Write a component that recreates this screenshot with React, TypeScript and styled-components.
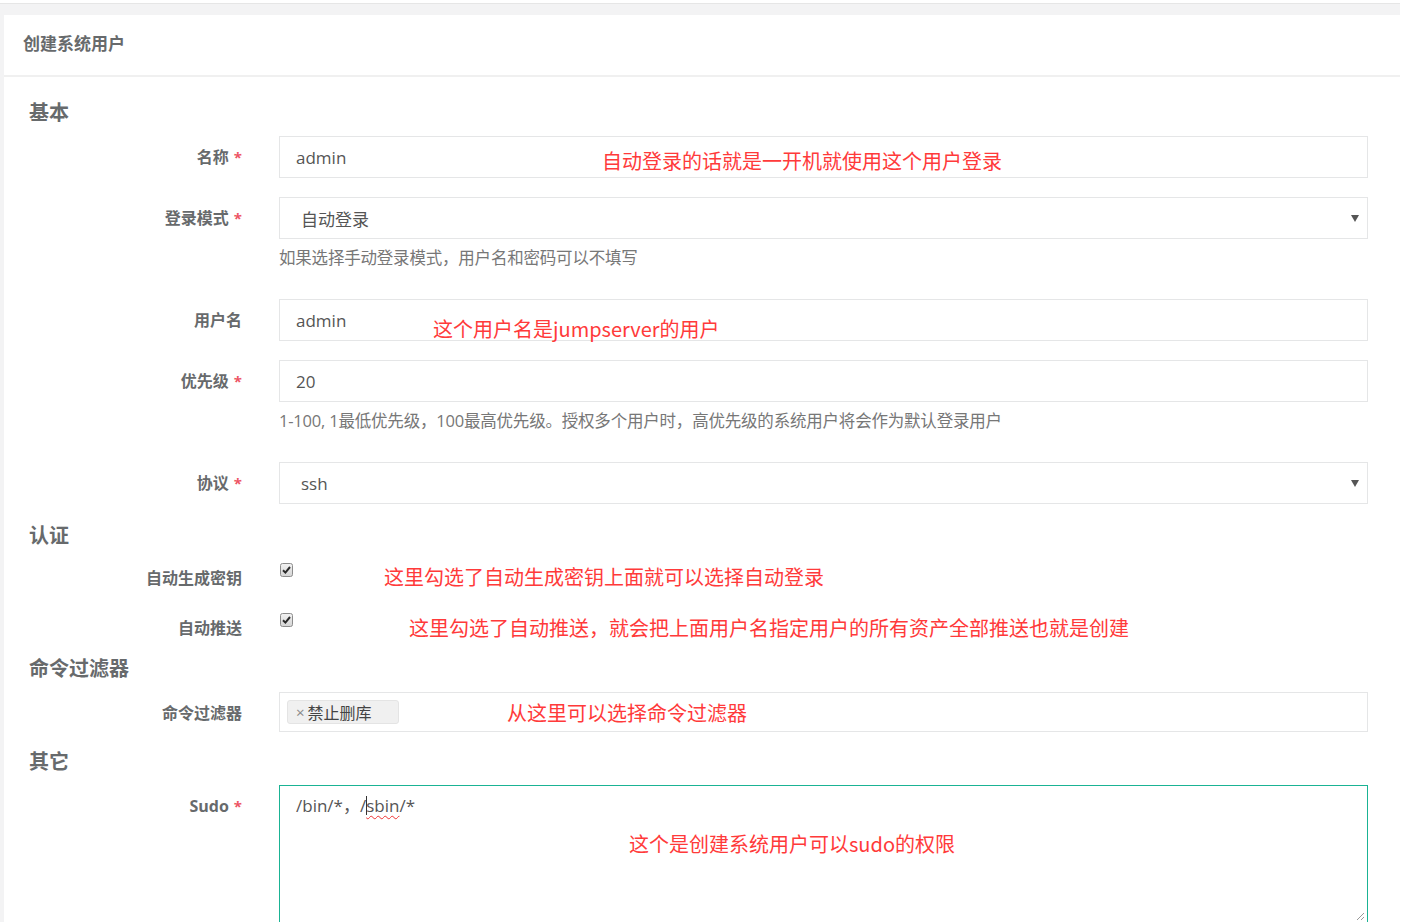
import React from "react";
import styled, { createGlobalStyle } from "styled-components";

const Global = createGlobalStyle`
  html, body { margin: 0; padding: 0; background: #fff; overflow: hidden; }
  body { font-family: "Open Sans", "Noto Sans CJK SC", sans-serif; color: #676a6c; }
  * { box-sizing: border-box; }
`;

const Page = styled.div`
  width: 1400px;
  min-height: 100vh;
  margin-top: 3px;
  border-top: 1px solid #e6e6e6;
  background: #f3f3f4;
  padding: 11px 0 0 4px;
  display: flex;
`;

const Card = styled.div`
  flex: 1;
  background: #fff;
  display: flex;
  flex-direction: column;
`;

const CardHeader = styled.div`
  height: 62px;
  padding: 0 19px 6px;
  display: flex;
  align-items: center;
  font-size: 17px;
  font-weight: 700;
  color: #676a6c;
  border-bottom: 2px solid #f0f0f0;
`;

const Form = styled.div`
  padding-top: 23px;
  display: flex;
  flex-direction: column;
`;

const SectionTitle = styled.div<{ $mt?: number }>`
  margin-top: ${(p) => p.$mt ?? 0}px;
  margin-bottom: 10px;
  padding-left: 25px;
  font-size: 20px;
  line-height: 26px;
  font-weight: 700;
  color: #676a6c;
`;

const Row = styled.div<{ $mb?: number }>`
  display: grid;
  grid-template-columns: 238px 1089px;
  column-gap: 37px;
  margin-bottom: ${(p) => p.$mb ?? 19}px;
`;

const Label = styled.div<{ $compact?: boolean }>`
  text-align: right;
  font-size: 16px;
  font-weight: 700;
  color: #676a6c;
  line-height: ${(p) => (p.$compact ? "22px" : "42px")};
  padding-top: ${(p) => (p.$compact ? "8px" : "0")};
  white-space: nowrap;
`;

const Req = styled.span`
  color: #ed5565;
  margin-left: 5px;
  font-size: 15px;
`;

const Field = styled.div`
  position: relative;
`;

const Input = styled.div<{ $h?: number; $pl?: number }>`
  height: ${(p) => p.$h ?? 42}px;
  border: 1px solid #e5e6e7;
  background: #fff;
  padding: 0 ${(p) => p.$pl ?? 16}px;
  display: flex;
  align-items: center;
  font-size: 17px;
  color: #555;
`;

const Select = styled(Input)`
  justify-content: space-between;
  padding-right: 8px;
`;

const Caret = styled.span`
  width: 0;
  height: 0;
  border-left: 4px solid transparent;
  border-right: 4px solid transparent;
  border-top: 7px solid #555;
`;

const Help = styled.div`
  margin-top: 8px;
  margin-bottom: 11px;
  line-height: 22px;
  font-size: 16.5px;
  color: #777;
  letter-spacing: -0.2px;
`;

const CheckWrap = styled.div`
  display: flex;
  align-items: flex-start;
  padding-top: 4px;
  padding-left: 1px;
  height: 31px;
`;

const Tag = styled.span`
  display: inline-flex;
  align-items: center;
  height: 24px;
  margin-left: -9px;
  padding: 0 26px 0 8px;
  background: #f0f0f0;
  border: 1px solid #e4e4e4;
  border-radius: 3px;
  font-size: 16px;
  color: #444;
`;

const TagX = styled.span`
  color: #888;
  font-size: 15px;
  margin-right: 3px;
`;

const TextArea = styled.div`
  position: relative;
  height: 139px;
  border: 1px solid #1ab394;
  padding: 8px 16px;
  font-size: 17px;
  line-height: 24px;
  color: #555;
`;

const Spell = styled.span`
  text-decoration: underline wavy #e33;
  text-decoration-thickness: 1px;
  text-underline-offset: 3px;
`;

const TextCursor = styled.span`
  display: inline-block;
  width: 1px;
  height: 19px;
  background: #333;
  vertical-align: -3px;
  margin: 0 -1px 0 0;
`;

const Resize = styled.svg`
  position: absolute;
  right: 2px;
  bottom: 2px;
`;

const Note = styled.div<{ $x: number; $y: number }>`
  position: absolute;
  left: ${(p) => p.$x}px;
  top: ${(p) => p.$y}px;
  font-size: 20px;
  line-height: 24px;
  color: #ff3a3a;
  white-space: nowrap;
  font-family: "Noto Sans CJK SC", "Open Sans", sans-serif;
  pointer-events: none;
`;

const CheckBox = () => (
  <svg width="13" height="14" viewBox="0 0 13 14">
    <defs>
      <linearGradient id="cbg" x1="0" y1="0" x2="0" y2="1">
        <stop offset="0" stopColor="#f2f2f2" />
        <stop offset="1" stopColor="#d4d4d4" />
      </linearGradient>
    </defs>
    <rect x="0.5" y="0.5" width="12" height="13" rx="2" fill="url(#cbg)" stroke="#8c8c8c" />
    <path d="M3 7.2 L5.4 9.6 L10 4" fill="none" stroke="#2a2a2a" strokeWidth="2" />
  </svg>
);

export default function App() {
  return (
    <>
      <Global />
      <Page>
        <Card>
          <CardHeader>创建系统用户</CardHeader>
          <Form>
            <SectionTitle>基本</SectionTitle>
            <Row>
              <Label>
                名称<Req>*</Req>
              </Label>
              <Field>
                <Input>admin</Input>
                <Note $x={323} $y={13}>自动登录的话就是一开机就使用这个用户登录</Note>
              </Field>
            </Row>
            <Row>
              <Label>
                登录模式<Req>*</Req>
              </Label>
              <Field>
                <Select $pl={21}>
                  <span>自动登录</span>
                  <Caret />
                </Select>
                <Help>如果选择手动登录模式，用户名和密码可以不填写</Help>
              </Field>
            </Row>
            <Row>
              <Label>用户名</Label>
              <Field>
                <Input>admin</Input>
                <Note $x={154} $y={18}>这个用户名是jumpserver的用户</Note>
              </Field>
            </Row>
            <Row>
              <Label>
                优先级<Req>*</Req>
              </Label>
              <Field>
                <Input>20</Input>
                <Help>1-100, 1最低优先级，100最高优先级。授权多个用户时，高优先级的系统用户将会作为默认登录用户</Help>
              </Field>
            </Row>
            <Row>
              <Label>
                协议<Req>*</Req>
              </Label>
              <Field>
                <Select $pl={21}>
                  <span>ssh</span>
                  <Caret />
                </Select>
              </Field>
            </Row>

            <SectionTitle>认证</SectionTitle>
            <Row>
              <Label $compact>自动生成密钥</Label>
              <Field>
                <CheckWrap>
                  <CheckBox />
                </CheckWrap>
                <Note $x={105} $y={6}>这里勾选了自动生成密钥上面就可以选择自动登录</Note>
              </Field>
            </Row>
            <Row>
              <Label $compact>自动推送</Label>
              <Field>
                <CheckWrap>
                  <CheckBox />
                </CheckWrap>
                <Note $x={130} $y={7}>这里勾选了自动推送，就会把上面用户名指定用户的所有资产全部推送也就是创建</Note>
              </Field>
            </Row>

            <SectionTitle $mt={-3}>命令过滤器</SectionTitle>
            <Row>
              <Label>命令过滤器</Label>
              <Field>
                <Input $h={40}>
                  <Tag>
                    <TagX>×</TagX>禁止删库
                  </Tag>
                </Input>
                <Note $x={228} $y={9}>从这里可以选择命令过滤器</Note>
              </Field>
            </Row>

            <SectionTitle $mt={-4}>其它</SectionTitle>
            <Row>
              <Label>
                Sudo<Req>*</Req>
              </Label>
              <Field>
                <TextArea>
                  /bin/*，/
                  <TextCursor />
                  <Spell>sbin</Spell>/*
                  <Resize width="10" height="10" viewBox="0 0 10 10">
                    <path d="M9 2 L2 9 M9 6 L6 9" stroke="#999" strokeWidth="1" />
                  </Resize>
                </TextArea>
                <Note $x={350} $y={47}>这个是创建系统用户可以sudo的权限</Note>
              </Field>
            </Row>
          </Form>
        </Card>
      </Page>
    </>
  );
}
